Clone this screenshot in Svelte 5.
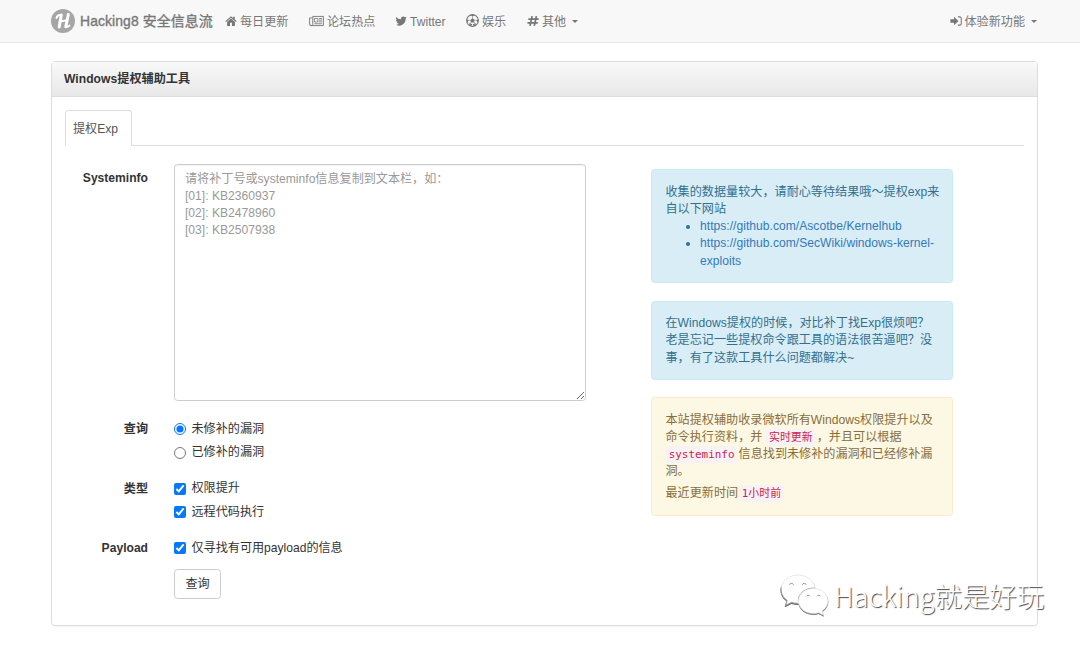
<script>
  const home = 'M8 1.500 0.300 8.200l1 1.200L8 3.600l6.700 5.800 1-1.200-2.700-2.400V2.200h-2.200v1.700zM8 4.600 2.800 9.100V14.500h3.900v-4.300h2.600v4.300h3.900V9.100z';
  const bird = 'M15.600 3.400a6 6 0 0 1-1.700.5 3 3 0 0 0 1.300-1.700 6 6 0 0 1-1.900.8 3.100 3.100 0 0 0-5.300 2.800A8.800 8.800 0 0 1 1.600 2.500a3.100 3.100 0 0 0 1 4.100 3 3 0 0 1-1.400-.4 3.100 3.100 0 0 0 2.500 3.100 3 3 0 0 1-1.400 0 3.100 3.100 0 0 0 2.900 2.200A6.200 6.200 0 0 1 .6 12.800a8.800 8.800 0 0 0 13.500-7.800 6 6 0 0 0 1.500-1.600z';
  const placeholder = '请将补丁号或systeminfo信息复制到文本栏，如：\n[01]: KB2360937\n[02]: KB2478960\n[03]: KB2507938';
  let query = $state('open');
  let checks = $state([true, true, true]);
</script>

{#snippet box(i, text)}
  <label class="option">
    <input type="checkbox" bind:checked={checks[i]} />
    <span>{text}</span>
  </label>
{/snippet}

<nav>
  <div class="brand">
    <svg class="logo" viewBox="0 0 24 24">
      <circle cx="12" cy="12" r="12" fill="#a6a6a6" />
      <g fill="none" stroke="#fff" stroke-linecap="round" stroke-linejoin="round">
        <path d="M10.300 6 8.200 18M17.300 5.500l-2.500 12.300" stroke-width="3" />
        <path d="M5.500 9C6 6.500 7.700 5.700 10.300 6M8.500 12.600l7.500-1.300M14.800 17.800c1.500.3 2.700-.2 3.600-1.200" stroke-width="2" />
      </g>
    </svg>
    <span>Hacking8 安全信息流</span>
  </div>
  <a class="item home" href="#home"><svg viewBox="0 0 16 16"><path d={home} /></svg><span>每日更新</span></a>
  <a class="item news" href="#forum">
    <svg class="wide" viewBox="0 0 18 14">
      <path d="M4.500 1.500h12.800v11H2a1.300 1.300 0 0 1-1.300-1.300V3.300h3M4.500 1.500v9.700c0 1.700-2.500 1.700-2.500 0" fill="none" stroke="currentColor" stroke-width="1.100" />
      <path d="M6.500 4h4.200v4.200H6.500zM12 4h3.800M12 6h3.800M12 8h3.800M6.500 10.300h9.300" fill="none" stroke="currentColor" />
    </svg><span>论坛热点</span>
  </a>
  <a class="item bird" href="#twitter"><svg viewBox="0 0 16 16"><path d={bird} /></svg><span>Twitter</span></a>
  <a class="item ball" href="#fun">
    <svg class="round" viewBox="0 0 16 16">
      <circle cx="8" cy="8" r="7.200" fill="none" stroke="currentColor" stroke-width="1.300" />
      <path d="M8 5.300l2.700 2-1 3.100H6.300l-1-3.100zM5 1.500 8 3.200l3-1.700L8 .8zM1 6.500l2.400 1.200L1.500 11 .8 8zM15 6.500l-2.400 1.200L14.500 11l.7-3zM4 14l.3-2.800 3.200 1.300-.8 2.300zM12 14l-.3-2.800-3.200 1.300.8 2.300z" />
      <path d="M8 3v3M3.300 7.500l2 .3M12.700 7.500l-2 .3M4.600 11.500l1.800-1.300M11.400 11.500l-1.800-1.300" stroke="currentColor" stroke-width=".7" />
    </svg><span>娱乐</span>
  </a>
  <a class="item hash" href="#more">
    <svg viewBox="0 0 16 16"><path d="M6.800 1.500 4 14.500M12.500 1.500 9.700 14.500M1.800 5.500h13.800M.6 10.500h13.800" fill="none" stroke="currentColor" stroke-width="2.300" /></svg><span>其他</span><i class="caret"></i>
  </a>
  <a class="item right" href="#new">
    <svg viewBox="0 0 16 16">
      <path d="M.5 5.800h4.800V2.300L11.300 8l-6 5.700v-3.500H.5z" />
      <path d="M10.500 2.500h2.700a1.800 1.800 0 0 1 1.800 1.800v7.400a1.800 1.800 0 0 1-1.800 1.800h-2.700" fill="none" stroke="currentColor" stroke-width="1.400" />
    </svg><span>体验新功能</span><i class="caret"></i>
  </a>
</nav>

<main>
  <header>Windows提权辅助工具</header>
  <div class="body">
    <div class="tabs"><span class="tab">提权Exp</span></div>
    <div class="columns">
      <form>
        <div class="row info">
          <span class="label">Systeminfo</span>
          <textarea {placeholder}></textarea>
        </div>
        <div class="row group">
          <span class="label">查询</span>
          <div>
            <label class="option"><input type="radio" value="open" bind:group={query} /><span>未修补的漏洞</span></label>
            <label class="option"><input type="radio" value="fixed" bind:group={query} /><span>已修补的漏洞</span></label>
          </div>
        </div>
        <div class="row group">
          <span class="label">类型</span>
          <div>
            {@render box(0, '权限提升')}
            {@render box(1, '远程代码执行')}
          </div>
        </div>
        <div class="row last">
          <span class="label">Payload</span>
          <div>{@render box(2, '仅寻找有可用payload的信息')}</div>
        </div>
        <div class="row">
          <span class="label"></span>
          <button type="button">查询</button>
        </div>
      </form>
      <aside>
        <section class="note first">
          收集的数据量较大，请耐心等待结果哦～提权exp来<br />自以下网站
          <ul>
            <li><a href="https://github.com/Ascotbe/Kernelhub">https://github.com/Ascotbe/Kernelhub</a></li>
            <li><a href="https://github.com/SecWiki/windows-kernel-exploits">https://github.com/SecWiki/windows-kernel-<br />exploits</a></li>
          </ul>
        </section>
        <section class="note second">
          在Windows提权的时候，对比补丁找Exp很烦吧？<br />老是忘记一些提权命令跟工具的语法很苦逼吧？没<br />事，有了这款工具什么问题都解决~
        </section>
        <section class="note warn">
          <p>本站提权辅助收录微软所有Windows权限提升以及<br />命令执行资料，并 <code>实时更新</code> ，并且可以根据<br /><code>systeminfo</code> 信息找到未修补的漏洞和已经修补漏<br />洞。</p>
          <p>最近更新时间 <code>1小时前</code></p>
        </section>
      </aside>
    </div>
  </div>
</main>

<div class="watermark">
  <svg viewBox="0 0 50 42">
    <path class="bubble" d="M18 1C8.500 1 1 7.400 1 15.500c0 4.500 2.400 8.300 6.100 10.900L5.400 31.500l6-3c2.200.6 4.500.9 6.600.9 9.500 0 17-6.300 17-14.200S27.500 1 18 1z" />
    <path class="rim" d="M34 14.100c-8.900 0-15.700 5.300-15.700 12.600" />
    <path class="bubble" d="M33.300 14.500c-8.200 0-14.800 5.500-14.800 12.500s6.600 12.600 14.800 12.600c1.900 0 3.700-.3 5.400-.9l4.800 2.600-1.300-4.400c3.500-2.400 5.800-5.700 5.800-9.900 0-7-6.500-12.500-14.700-12.500z" />
    <path class="rim" d="M1.200 13.500c-.7 5.300 1.700 10 5.900 12.900L5.400 31.500l6-3c2.200.6 4.500.9 6.600.9" />
    <path class="rim" d="M9.500 10.800a2.100 2.100 0 0 1 4 0M22.300 10.800a2.100 2.100 0 0 1 4 0M26.500 22.300a1.900 1.900 0 0 1 3.400 0M37 22.300a1.900 1.900 0 0 1 3.400 0" />
  </svg>
  <span>Hacking就是好玩</span>
</div>

<style>
  :global(body) {
    background: #fff;
    color: #333;
    font: 12.1px/17.3px "Liberation Sans", "Noto Sans CJK SC", sans-serif;
  }
  :global(#app) { height: 647px; overflow: hidden; }
  * { box-sizing: border-box; }
  a { text-decoration: none; }
  nav {
    display: flex;
    align-items: center;
    height: 43px;
    padding: 0 42px 0 51px;
    background: #f8f8f8;
    border-bottom: 1px solid #e7e7e7;
    color: #777;
    white-space: nowrap;
  }
  nav span { padding-top: 2px; }
  .item span { padding-top: 3px; }
  .brand {
    display: flex;
    align-items: center;
    width: 174px;
    gap: 5px;
    font-size: 13.9px;
    letter-spacing: .1px;
    -webkit-text-stroke: .35px #777;
  }
  .logo { width: 24px; height: 24px; flex: none; }
  .item { display: flex; align-items: center; color: #777; }
  .item svg { width: 12px; height: 12px; margin-right: 3px; fill: currentColor; flex: none; }
  .item .wide { width: 15px; height: 12px; margin-right: 3px; }
  .item .round { width: 13px; height: 13px; }
  .home { width: 84px; }
  .news { width: 86px; }
  .bird { width: 71px; }
  .ball { width: 61px; }
  .right { margin-left: auto; }
  .caret {
    margin: 2px 0 0 6px;
    border: 3.5px solid transparent;
    border-top-color: #777;
    border-bottom: 0;
  }
  .right .caret { margin-right: 1px; }
  main {
    width: 987px;
    height: 565px;
    margin: 18px 0 0 51px;
    border: 1px solid #ddd;
    border-radius: 3.5px;
    box-shadow: 0 1px 1px rgba(0, 0, 0, .04);
  }
  header {
    height: 35px;
    padding: 9px 12px;
    border-bottom: 1px solid #ddd;
    background: linear-gradient(#f9f9f9, #e8e8e8);
    font-weight: 700;
    letter-spacing: .04px;
  }
  .body { padding: 13px; }
  .tabs { display: flex; height: 36px; border-bottom: 1px solid #ddd; }
  .tab {
    width: 67px;
    height: 36px;
    padding: 10px 0 0 7px;
    border: 1px solid #ddd;
    border-bottom: 0;
    border-radius: 3.5px 3.5px 0 0;
    background: #fff;
    color: #555;
  }
  .columns { display: flex; padding-top: 18px; }
  form { width: 586px; }
  .row { display: flex; }
  .label { width: 83px; margin-right: 26px; text-align: right; font-weight: 700; flex: none; }
  .info { margin-bottom: 20px; }
  .info .label { padding-top: 6px; }
  textarea {
    width: 412px;
    height: 237px;
    padding: 5.5px 10px;
    border: 1px solid #ccc;
    border-radius: 3.5px;
    box-shadow: inset 0 1px 1px rgba(0, 0, 0, .05);
    font: inherit;
    resize: both;
    display: block;
    overflow: auto;
  }
  textarea::placeholder { color: #999; }
  .group { margin-bottom: 19px; }
  .last { margin-bottom: 13px; }
  .option { display: flex; align-items: center; height: 17px; }
  .option + .option { margin-top: 6.5px; }
  .option input { width: 12px; height: 12px; margin: 0 5.5px 1px 0; accent-color: #0878fa; }
  button {
    width: 47px;
    height: 30px;
    margin-top: -1px;
    padding: 0;
    border: 1px solid #ccc;
    border-radius: 3.5px;
    background: #fff;
    color: #333;
    font: inherit;
  }
  aside { width: 302px; padding-top: 5px; }
  .note {
    margin-bottom: 17.5px;
    padding: 13.5px 13px 13px 13.5px;
    border: 1px solid #c6ebf2;
    border-radius: 3.5px;
    background: #d9edf7;
    color: #31708f;
    letter-spacing: .02px;
    white-space: nowrap;
  }
  .first { width: 302px; height: 114px; }
  .second { height: 79.5px; }
  .warn { height: 119px; margin-top: -.5px; background: #fcf8e3; border-color: #faebcc; color: #8a6d3b; }
  ul { margin: 0; padding-left: 34.5px; }
  li a { color: #337ab7; }
  p { margin: 0 0 4px; }
  code {
    margin-right: -1.5px;
    margin-left: -3px;
    padding: 2px 3.2px;
    border-radius: 3.5px;
    background: #f9f2f4;
    color: #c7254e;
    font: 10.9px/14px "DejaVu Sans Mono", "Noto Sans CJK SC", monospace;
  }
  br + code { margin-left: 0; margin-right: -2.5px; }
  .watermark {
    position: absolute;
    left: 780px;
    top: 573px;
    display: flex;
    align-items: center;
    color: #fff;
    font: 300 27.4px/44px "Noto Sans CJK SC", sans-serif;
    text-shadow: 1px 1px 1px #444;
    white-space: nowrap;
  }
  .watermark svg { width: 50px; height: 42px; margin-right: 4px; filter: drop-shadow(.5px 1px .6px #666); }
  .bubble { fill: #fff; stroke: #ddd; stroke-width: .6; }
  .rim { fill: none; stroke: #888; stroke-width: .9; }
</style>
